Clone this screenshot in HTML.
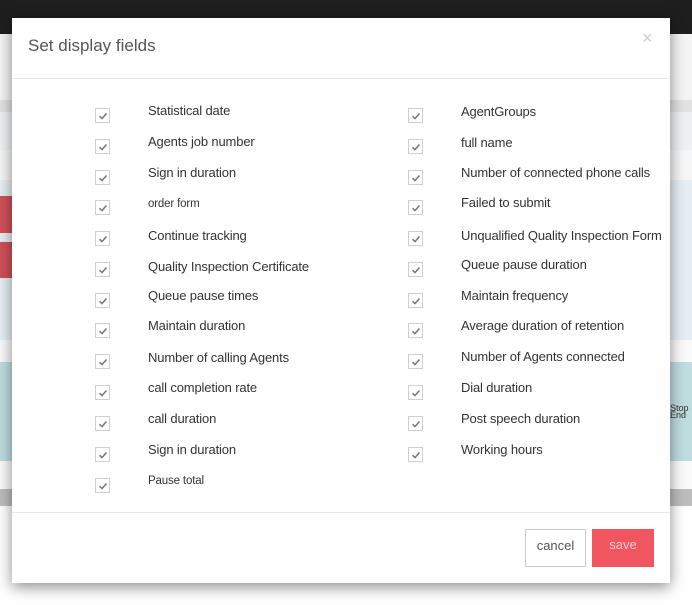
<!DOCTYPE html>
<html><head><meta charset="utf-8"><style>
*{margin:0;padding:0;box-sizing:border-box}
body{width:692px;height:605px;overflow:hidden;position:relative;background:#f4f4f4;font-family:"Liberation Sans",sans-serif}
.b{position:absolute;left:0;width:692px}
#dlg{position:absolute;left:12px;top:18px;width:658px;height:565px;background:#fff;box-shadow:0 4px 14px rgba(0,0,0,.45)}
.cb{position:absolute;width:15px;height:15px;border:1px solid #cfcfcf;background:#fff}
.cb svg{position:absolute;left:2px;top:2px}
.l{position:absolute;font-size:13px;color:#333;white-space:nowrap;line-height:16px;letter-spacing:-0.15px}
</style></head><body>
<div class="b" style="top:0;height:34px;background:#1e1e1e"></div>
<div class="b" style="top:100px;height:12px;background:#e2e2e2"></div>
<div class="b" style="top:112px;height:38px;background:#eef0f2"></div>
<div class="b" style="top:150px;height:30px;background:#f6f6f6"></div>
<div class="b" style="top:180px;height:160px;background:#e6eef4"></div>
<div style="position:absolute;left:0;top:196px;width:20px;height:37px;background:#d0505a"></div>
<div style="position:absolute;left:0;top:242px;width:20px;height:36px;background:#d0505a"></div>
<div class="b" style="top:340px;height:22px;background:#fafafa"></div>
<div class="b" style="top:362px;height:99px;background:#bfdcdf"></div>
<div class="b" style="top:461px;height:28px;background:#fafafa"></div>
<div class="b" style="top:489px;height:17px;background:#bdbdbd"></div>
<div class="b" style="top:506px;height:99px;background:#fff"></div>
<div style="position:absolute;left:670px;top:405px;font-size:9px;line-height:7px;color:#333">Stop<br>End</div>
<div id="dlg">
<div style="position:absolute;left:16px;top:18px;font-size:17px;color:#555">Set display fields</div>
<div style="position:absolute;left:630px;top:10px;font-size:18px;color:#ccc">×</div>
<div style="position:absolute;left:0;top:60px;width:658px;height:1px;background:#e8e8e8"></div>
<div style="position:absolute;left:0;top:494px;width:658px;height:1px;background:#e8e8e8"></div>
<div style="position:absolute;left:513px;top:511px;width:61px;height:38px;border:1px solid #ccc;font-size:13px;color:#555;text-align:center;line-height:32px">cancel</div>
<div style="position:absolute;left:580px;top:511px;width:62px;height:38px;background:#f05560;font-size:13px;color:#fcc;text-align:center;line-height:32px">save</div>
</div>
<div id="rows"></div>
<script>
var L=["Statistical date","Agents job number","Sign in duration","order form","Continue tracking","Quality Inspection Certificate","Queue pause times","Maintain duration","Number of calling Agents","call completion rate","call duration","Sign in duration","Pause total"];
var R=["AgentGroups","full name","Number of connected phone calls","Failed to submit","Unqualified Quality Inspection Form","Queue pause duration","Maintain frequency","Average duration of retention","Number of Agents connected","Dial duration","Post speech duration","Working hours"];
var cy=[115,146,177,207,238,269,300,330,361,392,423,454,485];
var ly=[111,142,173,204,236,267,296,326,358,388,419,450,481];
var ry=[112,143,173,203,236,265,296,326,357,388,419,450];
var h="",ck='<svg width="10" height="10" viewBox="0 0 10 10"><path d="M1.5 5.2 L4 7.5 L8.5 2.5" stroke="#777" stroke-width="1.5" fill="none"/></svg>';
for(var i=0;i<L.length;i++){var fs=(i==3||i==12)?"11.5px":"13px";
h+='<div class="cb" style="left:95px;top:'+(cy[i]-7)+'px">'+ck+'</div><div class="l" style="left:148px;top:'+(ly[i]-8)+'px;font-size:'+fs+'">'+L[i]+'</div>';}
for(var i=0;i<R.length;i++){h+='<div class="cb" style="left:408px;top:'+(cy[i]-7)+'px">'+ck+'</div><div class="l" style="left:461px;top:'+(ry[i]-8)+'px">'+R[i]+'</div>';}
document.getElementById("rows").innerHTML=h;
</script>
</body></html>
